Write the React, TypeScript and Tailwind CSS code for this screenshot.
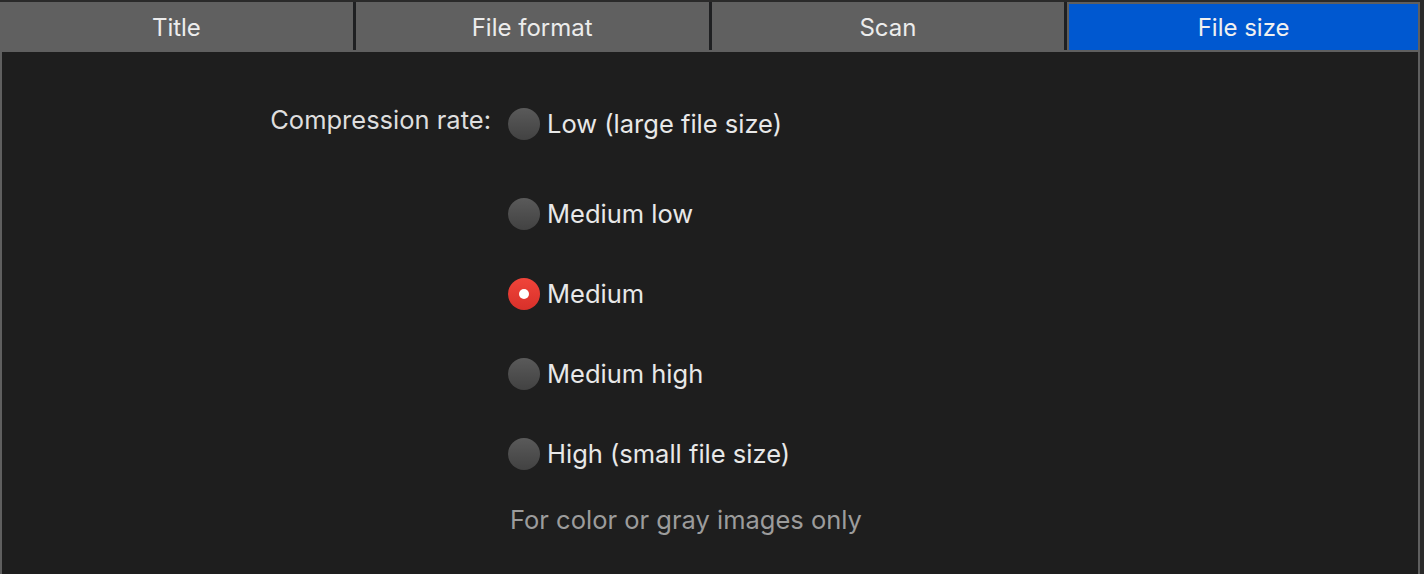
import React from 'react';

const tabs = ['Title', 'File format', 'Scan', 'File size'];

const options = [
  { label: 'Low (large file size)', gap: 'mt-0' },
  { label: 'Medium low', gap: 'mt-[58px]' },
  { label: 'Medium', gap: 'mt-[48px]' },
  { label: 'Medium high', gap: 'mt-[48px]' },
  { label: 'High (small file size)', gap: 'mt-[48px]' },
];

const Radio: React.FC<{ checked?: boolean }> = ({ checked }) =>
  checked ? (
    <div className="w-8 h-8 rounded-full bg-gradient-to-b from-[#f0443a] to-[#d8302a] flex items-center justify-center shrink-0">
      <div className="w-[10px] h-[10px] rounded-full bg-white" />
    </div>
  ) : (
    <div className="w-8 h-8 rounded-full bg-gradient-to-b from-[#5a5a5a] to-[#424242] shrink-0" />
  );

export default function App() {
  const selected = 'Medium';

  return (
    <div
      className="w-[1424px] h-[574px] bg-[#2a2a2a] overflow-hidden pt-[2px]"
      style={{ fontFamily: 'Inter, "Noto Sans", sans-serif' }}
    >
      <div className="w-[1420px]">
        <div className="grid grid-cols-4 gap-[3px] bg-[#1f2022] h-[48px]">
          {tabs.map((t) =>
            t === 'File size' ? (
              <div
                key={t}
                className="bg-[#0058d0] border-2 border-b-0 border-[#5f5f5f] flex items-center justify-center pt-[2px] text-[#f0f0f0] text-[24px]"
              >
                {t}
              </div>
            ) : (
              <div key={t} className="bg-[#606060] flex items-center justify-center pt-[4px] text-[#ececec] text-[24px]">
                {t}
              </div>
            )
          )}
        </div>

        <div className="h-[530px] bg-[#1e1e1e] border-t-2 border-x-2 border-[#5f5f5f] pt-[56px]">
          <div className="flex">
            <div className="w-[489px] h-8 flex items-center justify-end text-[25.5px] text-[#dedede] leading-none -mt-[4px]">
              Compression rate:
            </div>
            <div className="ml-[17px] flex flex-col">
              {options.map((o) => (
                <div key={o.label} className={`flex items-center gap-[7px] ${o.gap}`}>
                  <Radio checked={o.label === selected} />
                  <span className="text-[25.5px] text-[#e8e8e8] leading-none">{o.label}</span>
                </div>
              ))}
              <div className="mt-[37px] ml-[2px] text-[25.5px] text-[#9c9c9c] leading-none">
                For color or gray images only
              </div>
            </div>
          </div>
        </div>
      </div>
    </div>
  );
}
